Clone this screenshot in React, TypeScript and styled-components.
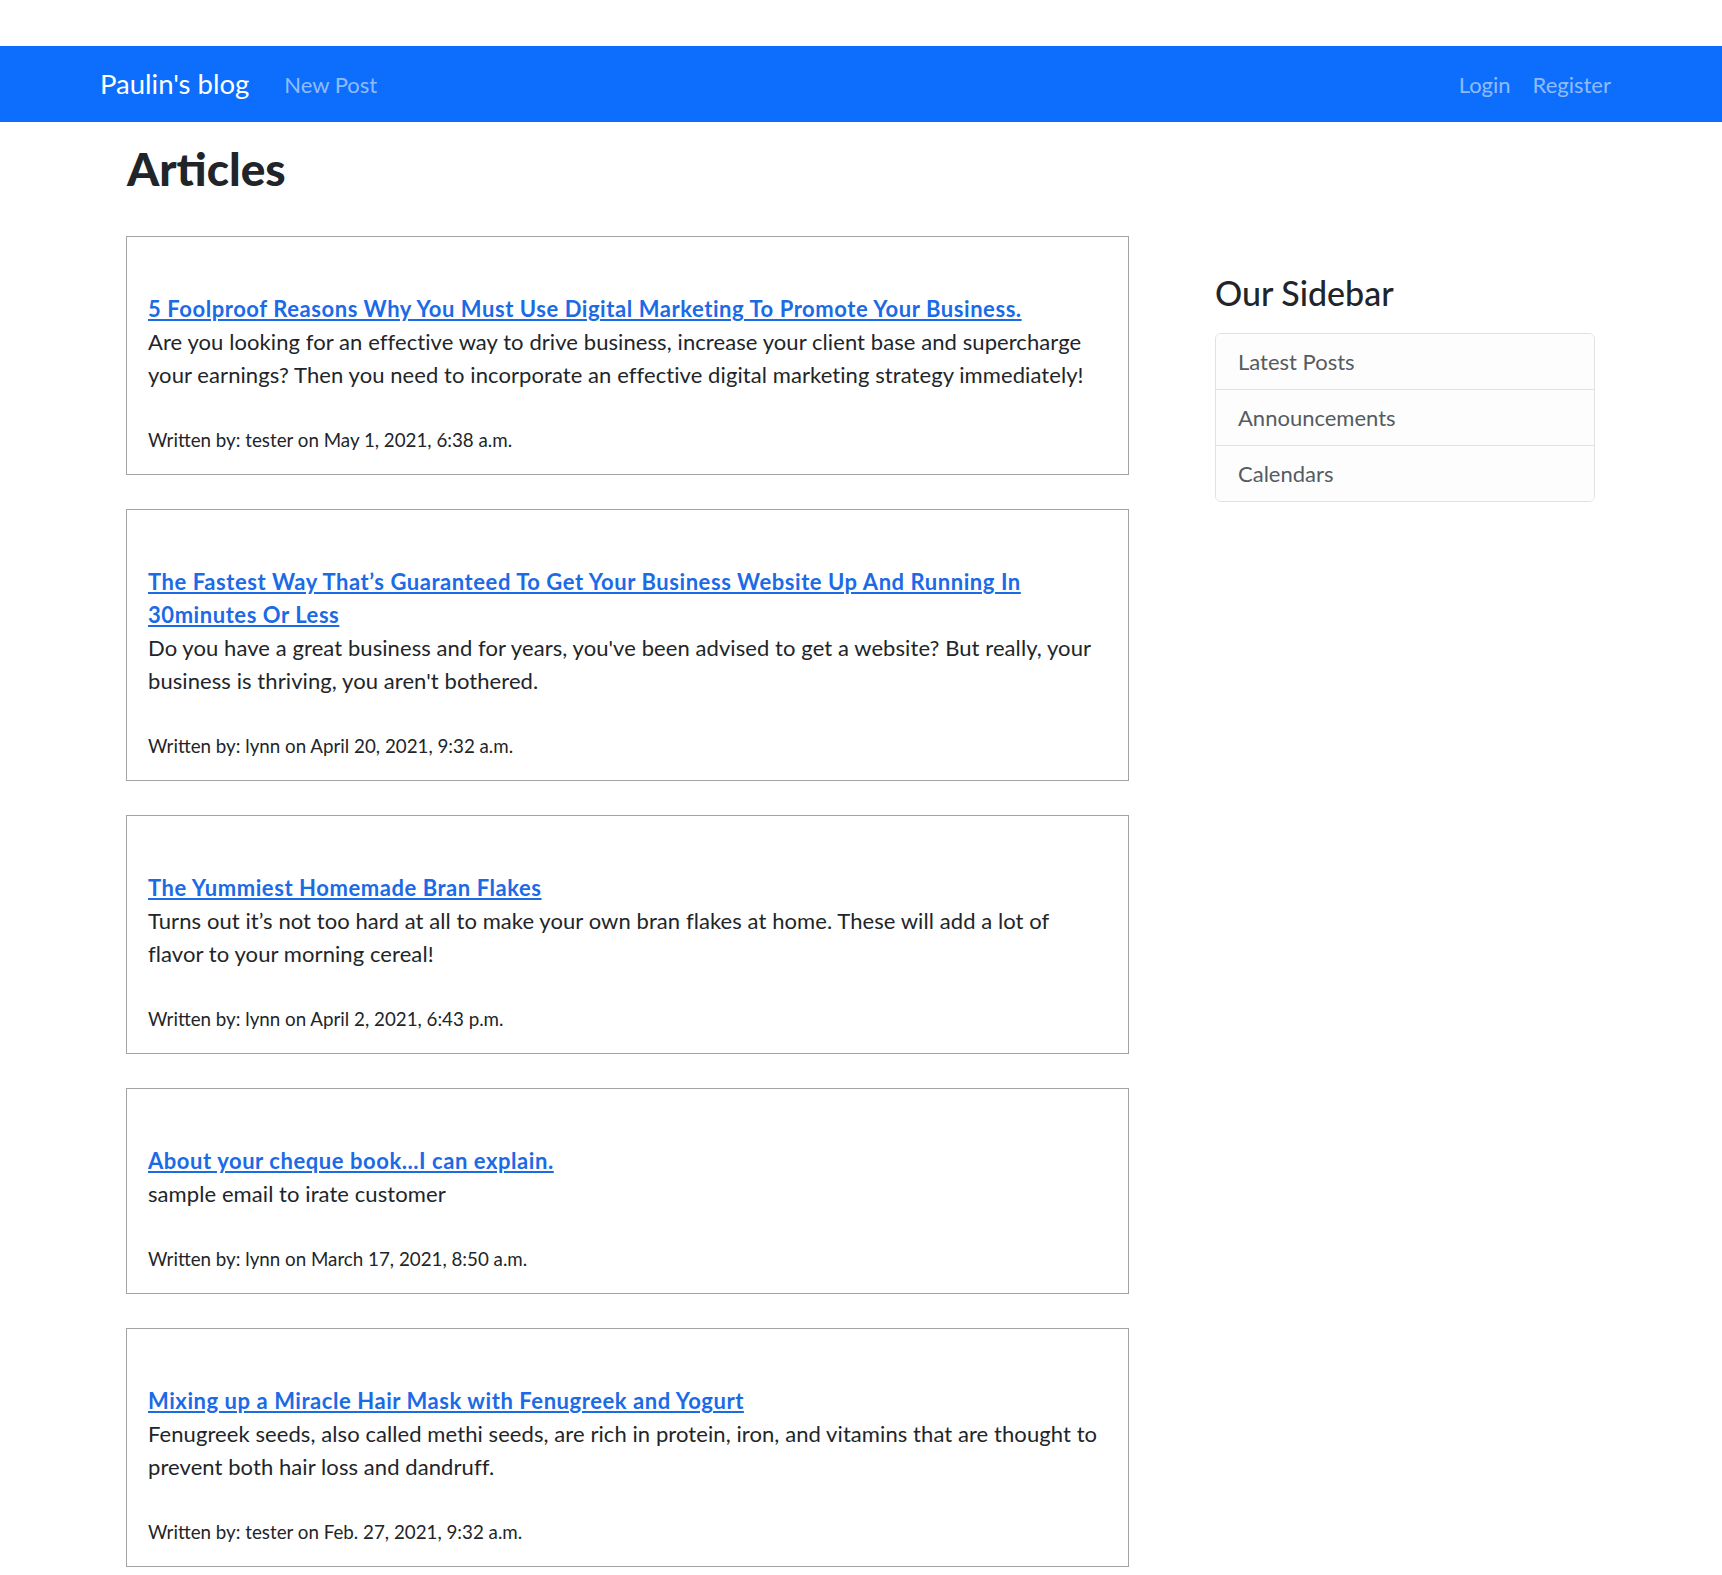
import React from "react";
import styled, { createGlobalStyle } from "styled-components";

const GlobalStyle = createGlobalStyle`
  html, body { margin: 0; padding: 0; background: #fff; }
  body {
    font-family: Lato, "Noto Sans", "Liberation Sans", sans-serif;
    color: #212529;
    font-size: 22px;
    line-height: 1.5;
  }
  * { box-sizing: border-box; }
`;

const Page = styled.div`
  padding-top: 46px;
  min-height: 1575px;
`;

const Navbar = styled.nav`
  height: 76px;
  background: #0d6efd;
  display: flex;
  align-items: center;
  padding: 0 100px 0 100px;
`;

const Brand = styled.a`
  color: #fff;
  font-size: 27.5px;
  text-decoration: none;
  margin-right: 24px;
`;

const NavGroup = styled.div<{ $end?: boolean }>`
  display: flex;
  align-items: center;
  margin-left: ${(p) => (p.$end ? "auto" : "0")};
`;

const NavLink = styled.a`
  color: rgba(255, 255, 255, 0.55);
  font-size: 22px;
  padding: 0 11px;
  text-decoration: none;
`;

const Main = styled.main`
  padding: 14px 0 0 126px;
`;

const PageTitle = styled.h1`
  font-size: 46px;
  font-weight: 900;
  line-height: 66px;
  margin: 0 0 34px 1px;
`;

const Row = styled.div`
  display: flex;
  align-items: flex-start;
  gap: 86px;
`;

const ArticleList = styled.div`
  width: 1003px;
  display: flex;
  flex-direction: column;
  gap: 34px;
`;

const Card = styled.article`
  border: 1px solid #a3a3a3;
  padding: 55px 22px 20px 21px;
`;

const Title = styled.a`
  display: block;
  color: #1b6ae6;
  font-weight: 700;
  letter-spacing: 0.56px;
  text-decoration: underline;
  line-height: 33px;
`;

const Excerpt = styled.p`
  margin: 0;
  line-height: 33px;
  letter-spacing: 0.08px;
`;

const Meta = styled.p`
  margin: 34px 0 0 0;
  font-size: 18.75px;
  line-height: 29px;
`;

const Sidebar = styled.aside`
  width: 380px;
  padding-top: 34px;
`;

const SidebarTitle = styled.h3`
  font-size: 34px;
  font-weight: 500;
  line-height: 46px;
  margin: 0 0 17px 0;
`;

const ListGroup = styled.ul`
  list-style: none;
  margin: 0;
  padding: 0;
  border: 1px solid #dee2e6;
  border-radius: 6px;
  overflow: hidden;
`;

const ListItem = styled.li`
  padding: 11px 22px;
  line-height: 33px;
  color: #555b61;
  background: #fdfdfd;
  & + & { border-top: 1px solid #dee2e6; }
`;

const articles = [
  {
    title: "5 Foolproof Reasons Why You Must Use Digital Marketing To Promote Your Business.",
    excerpt:
      "Are you looking for an effective way to drive business, increase your client base and supercharge your earnings? Then you need to incorporate an effective digital marketing strategy immediately!",
    meta: "Written by: tester on May 1, 2021, 6:38 a.m.",
  },
  {
    title: "The Fastest Way That\u2019s Guaranteed To Get Your Business Website Up And Running In 30minutes Or Less",
    excerpt:
      "Do you have a great business and for years, you've been advised to get a website? But really, your business is thriving, you aren't bothered.",
    meta: "Written by: lynn on April 20, 2021, 9:32 a.m.",
  },
  {
    title: "The Yummiest Homemade Bran Flakes",
    excerpt:
      "Turns out it\u2019s not too hard at all to make your own bran flakes at home. These will add a lot of flavor to your morning cereal!",
    meta: "Written by: lynn on April 2, 2021, 6:43 p.m.",
  },
  {
    title: "About your cheque book...I can explain.",
    excerpt: "sample email to irate customer",
    meta: "Written by: lynn on March 17, 2021, 8:50 a.m.",
  },
  {
    title: "Mixing up a Miracle Hair Mask with Fenugreek and Yogurt",
    excerpt:
      "Fenugreek seeds, also called methi seeds, are rich in protein, iron, and vitamins that are thought to prevent both hair loss and dandruff.",
    meta: "Written by: tester on Feb. 27, 2021, 9:32 a.m.",
  },
];

export default function App() {
  return (
    <Page>
      <GlobalStyle />
      <Navbar>
        <Brand href="#">Paulin's blog</Brand>
        <NavGroup>
          <NavLink href="#">New Post</NavLink>
        </NavGroup>
        <NavGroup $end>
          <NavLink href="#">Login</NavLink>
          <NavLink href="#">Register</NavLink>
        </NavGroup>
      </Navbar>
      <Main>
        <PageTitle>Articles</PageTitle>
        <Row>
          <ArticleList>
            {articles.map((a) => (
              <Card key={a.title}>
                <Title href="#">{a.title}</Title>
                <Excerpt>{a.excerpt}</Excerpt>
                <Meta>{a.meta}</Meta>
              </Card>
            ))}
          </ArticleList>
          <Sidebar>
            <SidebarTitle>Our Sidebar</SidebarTitle>
            <ListGroup>
              <ListItem>Latest Posts</ListItem>
              <ListItem>Announcements</ListItem>
              <ListItem>Calendars</ListItem>
            </ListGroup>
          </Sidebar>
        </Row>
      </Main>
    </Page>
  );
}
